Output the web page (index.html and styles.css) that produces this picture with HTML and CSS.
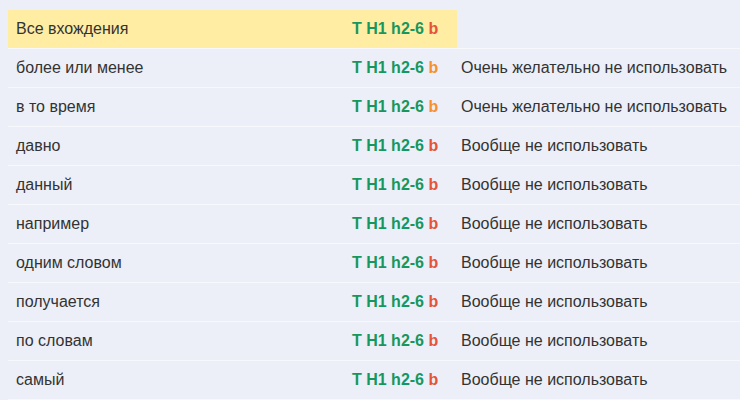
FILE: index.html
```html
<!DOCTYPE html>
<html lang="ru">
<head>
<meta charset="utf-8">
<link rel="stylesheet" href="styles.css">
</head>
<body>
<div class="table">
  <div class="row head">
    <div class="cell word hl">Все вхождения</div>
    <div class="cell tags hl"><span><span class="g">T H1 h2-6</span> <span class="r">b</span></span></div>
    <div class="cell note"></div>
  </div>
  <div class="row">
    <div class="cell word">более или менее</div>
    <div class="cell tags"><span><span class="g">T H1 h2-6</span> <span class="o">b</span></span></div>
    <div class="cell note">Очень желательно не использовать</div>
  </div>
  <div class="row">
    <div class="cell word">в то время</div>
    <div class="cell tags"><span><span class="g">T H1 h2-6</span> <span class="o">b</span></span></div>
    <div class="cell note">Очень желательно не использовать</div>
  </div>
  <div class="row">
    <div class="cell word">давно</div>
    <div class="cell tags"><span><span class="g">T H1 h2-6</span> <span class="r">b</span></span></div>
    <div class="cell note">Вообще не использовать</div>
  </div>
  <div class="row">
    <div class="cell word">данный</div>
    <div class="cell tags"><span><span class="g">T H1 h2-6</span> <span class="r">b</span></span></div>
    <div class="cell note">Вообще не использовать</div>
  </div>
  <div class="row">
    <div class="cell word">например</div>
    <div class="cell tags"><span><span class="g">T H1 h2-6</span> <span class="r">b</span></span></div>
    <div class="cell note">Вообще не использовать</div>
  </div>
  <div class="row">
    <div class="cell word">одним словом</div>
    <div class="cell tags"><span><span class="g">T H1 h2-6</span> <span class="r">b</span></span></div>
    <div class="cell note">Вообще не использовать</div>
  </div>
  <div class="row">
    <div class="cell word">получается</div>
    <div class="cell tags"><span><span class="g">T H1 h2-6</span> <span class="r">b</span></span></div>
    <div class="cell note">Вообще не использовать</div>
  </div>
  <div class="row">
    <div class="cell word">по словам</div>
    <div class="cell tags"><span><span class="g">T H1 h2-6</span> <span class="r">b</span></span></div>
    <div class="cell note">Вообще не использовать</div>
  </div>
  <div class="row">
    <div class="cell word">самый</div>
    <div class="cell tags"><span><span class="g">T H1 h2-6</span> <span class="r">b</span></span></div>
    <div class="cell note">Вообще не использовать</div>
  </div>
</div>
</body>
</html>
```

FILE: styles.css
```css
html, body {
  margin: 0;
  padding: 0;
  background: #eceff7;
}
body {
  padding: 10px 0 0 8px;
  font-family: "Liberation Sans", Arial, sans-serif;
  font-size: 16px;
  color: #333333;
  overflow: hidden;
}
.table {
  display: flex;
  flex-direction: column;
}
.row {
  display: grid;
  grid-template-columns: 336px 113px 1fr;
  height: 38px;
  border-bottom: 1px solid #f7f8fc;
}
.cell {
  display: flex;
  align-items: center;
  white-space: nowrap;
}
.word {
  padding-left: 8px;
}
.tags {
  padding-left: 8px;
  font-weight: bold;
}
.note {
  padding-left: 4px;
}
.hl {
  background: #ffeda3;
}
.g { color: #16975f; }
.r { color: #e4533a; }
.o { color: #f7902f; }
```
